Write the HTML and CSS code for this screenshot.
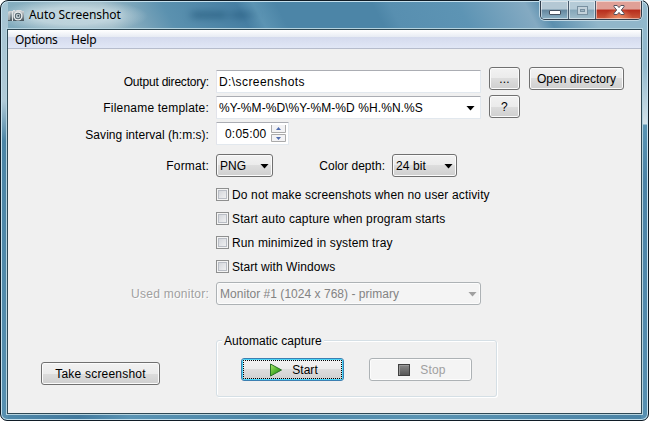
FILE: index.html
```html
<!DOCTYPE html>
<html lang="en">
<head>
<meta charset="utf-8">
<title>Auto Screenshot</title>
<link rel="stylesheet" href="styles.css">
</head>
<body>
<div class="window">
  <header class="titlebar">
    <svg class="camera" width="16" height="14" viewBox="0 0 16 14">
      <defs><linearGradient id="cam" x2="0" y2="1"><stop offset="0" stop-color="#e3e6e8"/><stop offset=".5" stop-color="#8b969c"/><stop offset="1" stop-color="#46545c"/></linearGradient></defs>
      <path d="M1 2h4V1h2v1l2-1h4l1 1h2v10H0V3z" fill="url(#cam)"/>
      <path d="M1 3v8M4.500 2v10" stroke="#dfe4e6" fill="none"/>
      <circle cx="10" cy="7" r="4.500" fill="#eef1f2"/>
      <circle cx="10" cy="7" r="3.200" fill="#56666f"/>
      <circle cx="10" cy="7" r="2.200" fill="#c5d1d7"/>
      <circle cx="10.300" cy="6.700" r="1" fill="#40515a"/>
    </svg>
    <h1 class="title">Auto Screenshot</h1>
    <div class="backdrop"></div>
    <div class="controls">
      <span class="control minimize"><svg width="12" height="5"><rect x=".5" y=".5" width="11" height="4" rx=".5" fill="#fff" stroke="#44505f"/></svg></span>
      <span class="control maximize"><svg width="11" height="9"><rect x=".5" y=".5" width="10" height="8" fill="#c3d2db" stroke="#7890a0"/><rect x="3.500" y="3.500" width="4" height="2" fill="#9fb5c3" stroke="#7890a0"/></svg></span>
      <span class="control close"><svg width="12" height="10"><path d="M1 .5h3.200L6 2.600 7.800.5H11v1.200L8.300 5 11 8.300v1.200H7.800L6 7.400 4.200 9.500H1V8.300L3.700 5 1 1.700z" fill="#fff" stroke="#54515c"/></svg></span>
    </div>
  </header>
  <main class="client">
    <nav class="menu"><span class="options">Options</span><span class="help">Help</span></nav>
    <div class="form">
      <div class="row">
        <label class="label t-output">Output directory:</label>
        <div class="field wide"><span class="t-dir">D:\screenshots</span></div>
        <div class="button small first"><span>...</span></div>
        <div class="button open first"><span class="t-open">Open directory</span></div>
      </div>
      <div class="row">
        <label class="label t-file">Filename template:</label>
        <div class="field wide"><span class="t-template">%Y-%M-%D\%Y-%M-%D %H.%N.%S</span><i class="arrow"></i></div>
        <div class="button small second"><span>?</span></div>
      </div>
      <div class="row">
        <label class="label interval t-interval">Saving interval (h:m:s):</label>
        <div class="field time"><span class="t-time">0:05:00</span>
          <svg class="spinner" width="15" height="18"><path d="M.5 0v7.500h14V0M.5 9.500h14v7H.5z" fill="#f3f3f5" stroke="#aaa"/><path d="M5 5h5L7.500 2z" fill="#506cae"/><path d="M5 12h5l-2.500 3z" fill="#506cae"/></svg>
        </div>
      </div>
      <div class="row formats">
        <label class="label t-format">Format:</label>
        <div class="button select png"><span class="t-png">PNG</span><i class="arrow"></i></div>
        <label class="depth-label t-depth">Color depth:</label>
        <div class="button select bits"><span class="t-bits">24 bit</span><i class="arrow"></i></div>
      </div>
      <div class="checks">
        <label class="check"><i class="box"></i><span class="t-check1">Do not make screenshots when no user activity</span></label>
        <label class="check"><i class="box"></i><span class="t-check2">Start auto capture when program starts</span></label>
        <label class="check"><i class="box"></i><span class="t-check3">Run minimized in system tray</span></label>
        <label class="check"><i class="box"></i><span class="t-check4">Start with Windows</span></label>
      </div>
      <div class="row monitor">
        <label class="label muted t-monitor">Used monitor:</label>
        <div class="button select wide disabled"><span class="t-primary">Monitor #1 (1024 x 768) - primary</span><i class="arrow"></i></div>
      </div>
    </div>
    <div class="actions">
      <div class="button take"><span class="t-take">Take screenshot</span></div>
      <section class="group">
        <h2 class="legend">Automatic capture</h2>
        <div class="button start">
          <svg width="14" height="14"><defs><linearGradient id="play" x2="1" y2="1"><stop offset="0" stop-color="#b0e86f"/><stop offset=".5" stop-color="#52b52e"/><stop offset="1" stop-color="#177b13"/></linearGradient></defs><path d="M1.500 1l11 6-11 6z" fill="url(#play)" stroke="#287126"/></svg>
          <span class="t-start">Start</span>
        </div>
        <div class="button stop disabled">
          <svg width="12" height="12"><defs><linearGradient id="halt" x2="0" y2="1"><stop offset="0" stop-color="#8a8a8a"/><stop offset="1" stop-color="#555"/></linearGradient></defs><rect x=".5" y=".5" width="11" height="11" fill="url(#halt)" stroke="#3f3f3f"/><path d="M1.500 11V1.500H11" fill="none" stroke="#999"/></svg>
          <span class="t-stop">Stop</span>
        </div>
      </section>
    </div>
  </main>
</div>
</body>
</html>
```
FILE: styles.css
```css
* { box-sizing: border-box; }
html, body { width: 649px; height: 421px; margin: 0; overflow: hidden; background: #fff; }
body { font: 12px/14px "Liberation Sans", Arial, sans-serif; color: #000; }
svg { display: block; flex: none; }
span, label, h1, h2 { white-space: nowrap; }

.window {
  width: 649px; height: 421px; padding: 0 6px 5px 6px;
  border: 1px solid #101c26; border-radius: 8px 8px 7px 7px;
  box-shadow: inset 0 0 0 1px #c5e0ed;
  background:
    linear-gradient(180deg, #91b8cc 0 65px, #d3e2e9 123px, #5994b3 124px, #4b83a6 180px, #5790b1 100%) right / 7px 100% no-repeat,
    linear-gradient(180deg, #a5c4d3 0, #b0cad7 100px, #4b85a6 140px, #5790b0 100%) left / 7px 100% no-repeat,
    radial-gradient(ellipse 75px 17px at 72px 15px, #c3d7dfd9 50%, transparent) top / 100% 29px no-repeat,
    linear-gradient(62deg, #7faabd 0, #9ab8c5 100px, #5b91af 155px, #477fa3 220px, #5c94b3 235px, #4c85a7 255px, #4c85a7 340px, #588fb0 355px, #5d94b4 415px, #84aac2 475px, #5b8fae 490px, #91b6ca 530px) top / 100% 29px no-repeat,
    linear-gradient(90deg, #5089aa, #427a9e 12%, #5a94b4 20%, #4c86a7 40%, #5a94b3 65%, #4b83a5);
}
.titlebar { display: flex; height: 28px; align-items: flex-start; }
.camera { margin: 8px 0 0 1px; }
.title { margin: 6px 0 0 5px; width: 92px; font: 12px/16px "Noto Sans", sans-serif; letter-spacing: -.05px; text-shadow: 0 0 7px #d8e8ed; }
.backdrop { width: 72px; height: 8px; margin: 10px 0 0 66px; background: linear-gradient(90deg, transparent, #23587b 12%, #245b7c 50%, #3d7496 55%, #23587b 75%, transparent); filter: blur(3px); opacity: .55; }
.controls { display: flex; width: 102px; height: 19px; margin: 0 0 0 auto; border: 1px solid #303d4b; border-top: 0; border-radius: 0 0 5px 5px; box-shadow: 0 0 0 1px #c1d8e4; overflow: hidden; }
.control { display: flex; align-items: center; justify-content: center; box-shadow: inset 0 0 0 1px #ffffff80; }
.minimize { width: 28px; border-right: 1px solid #47596b; background: linear-gradient(#b4c8d4 45%, #64869d 50%, #8cb1c5); }
.minimize svg { margin-top: 5px; }
.maximize { width: 27px; border-right: 1px solid #47596b; background: linear-gradient(#b5cbd7 45%, #85a6b9 50%, #a0bdcb); }
.close { flex: 1; background: radial-gradient(ellipse at 50% 100%, #ef9269 0, transparent 45%), linear-gradient(#e0a097 45%, #b72c1c 50%, #cb5b3d); }
.client { height: 385px; width: 635px; border: 1px solid #2e4854; box-shadow: 0 0 0 1px #b5d3df; background: #f0f0f0; }
.menu { display: flex; height: 19px; padding: 1px 0 0 7px; font: 12px/18px "Noto Sans", sans-serif; border-bottom: 1px solid #b6bccc; background: linear-gradient(#fff, #e7ebf3 7px, #d4daed 7px, #e1e7f6); }
.options { width: 56px; letter-spacing: -.3px; }
.help { letter-spacing: -.2px; }

.form { padding-top: 18px; }
.row { display: flex; height: 26px; align-items: flex-start; }
.label { width: 201px; margin: 8px 7px 0 0; display: flex; justify-content: flex-end; }
.interval { margin-top: 9px; }
.field { display: flex; height: 23px; margin-top: 3px; padding: 0 2px; align-items: center; border: 1px solid #e2e8ee; border-top-color: #abadb3; border-left-color: #e2e3ea; border-radius: 1px; background: #fff; }
.wide { width: 265px; }
.time { width: 73px; padding-left: 8px; }
.spinner { margin-left: auto; }
.arrow { width: 9px; height: 5px; margin: 1px 3px 0 auto; background: #000; clip-path: polygon(0 0, 100% 0, 50% 100%); }
.button { display: flex; height: 23px; align-items: center; justify-content: center; border: 1px solid #707070; border-radius: 3px; box-shadow: inset 0 0 0 1px #fbfbfb; background: linear-gradient(#f2f2f2, #ebebeb 50%, #ddd 50%, #cfcfcf); }
.small { width: 31px; margin-left: 8px; }
.open { width: 95px; margin-left: 9px; }
.second { margin-top: 2px; }
.formats { height: 23px; margin-top: 9px; }
.formats .label, .monitor .label { margin-top: 5px; }
.select { justify-content: flex-start; padding-left: 3px; }
.png { width: 57px; }
.bits { width: 65px; }
.depth-label { display: flex; justify-content: flex-end; width: 112px; margin: 5px 7px 0 0; }
.checks { margin: 6px 0 0 208px; }
.check { display: flex; height: 24px; padding-top: 5px; }
.box { width: 13px; height: 13px; margin-right: 3px; border: 1px solid #8e8f8f; box-shadow: inset 0 0 0 1px #f4f4f4, inset 0 0 0 2px #b9bdc5; background: linear-gradient(135deg, #cdd0d6, #f6f6f6); }
.monitor { height: 23px; margin-top: 3px; }
.muted { color: #a0a0a0; text-shadow: 1px 1px #fff; }
.disabled { color: #838383; border-color: #adb2b5; box-shadow: inset 0 0 0 1px #fcfcfc; background: #f4f4f4; }
.disabled .arrow { background: #a0a0a0; }
.actions { display: flex; align-items: flex-start; margin-top: 35px; padding-left: 33px; }
.take { width: 119px; margin-top: 22px; }
.group { position: relative; display: flex; width: 281px; height: 57px; margin-left: 56px; padding: 17px 0 0 24px; border: 1px solid #d5dfe5; border-radius: 3px; box-shadow: inset 1px 1px #fff, 1px 1px #fff; }
.legend { position: absolute; left: 5px; top: -7px; margin: 0; padding: 0 2px; font: inherit; background: #f0f0f0; letter-spacing: .06px; }
.start { width: 103px; padding-left: 2px; border-color: #3c7fb1; box-shadow: inset 0 0 0 1px #49d5f8; outline: 1px dotted #000; outline-offset: -3px; }
.start svg { margin-right: 9px; }
.stop { width: 103px; margin-left: 25px; padding-left: 3px; color: #a0a0a0; }
.stop svg { margin-right: 10px; }

.label, .depth-label, .checks, .button, .field { letter-spacing: .2px; }
.t-output { letter-spacing: -.2px; }
.t-interval { letter-spacing: .04px; }
.t-dir { letter-spacing: .42px; }
.t-template { letter-spacing: .08px; }
.t-depth, .t-open, .t-start { letter-spacing: .03px; }
.t-png, .t-bits { letter-spacing: .1px; }
.t-check1, .t-check2, .t-check3 { letter-spacing: .14px; }
.t-check4 { letter-spacing: .07px; }
.t-monitor { letter-spacing: .25px; }
.t-primary { letter-spacing: .03px; }
```
